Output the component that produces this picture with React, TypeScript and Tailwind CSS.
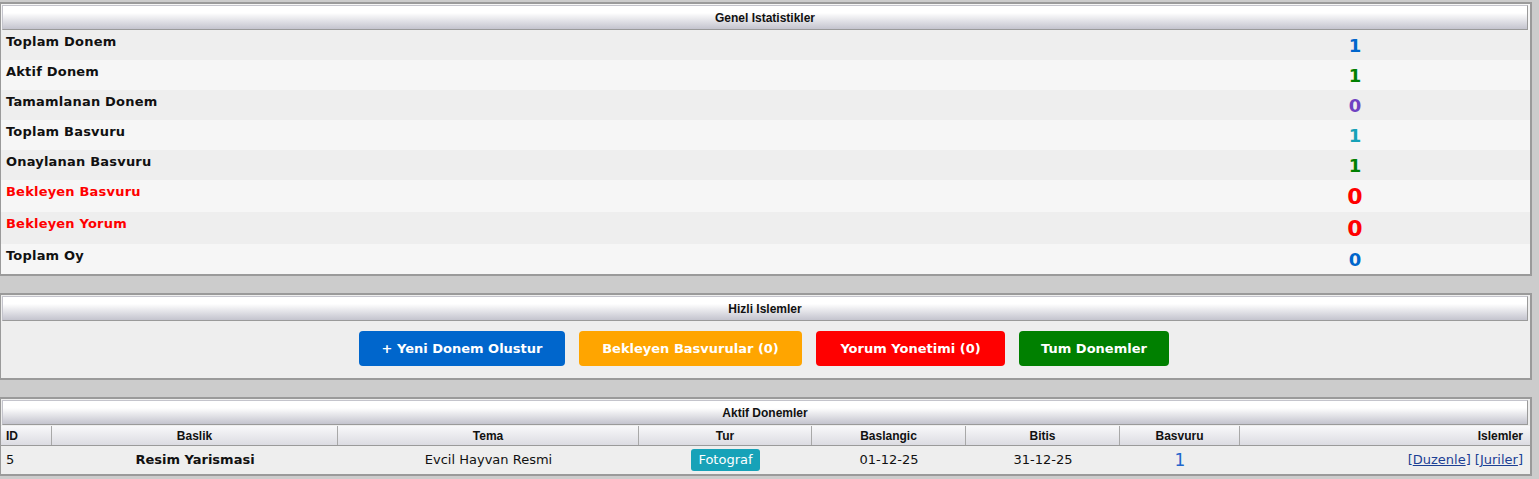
import React from "react";

const FONT = { fontFamily: '"DejaVu Sans", Verdana, sans-serif' };
const HFONT = { fontFamily: '"Liberation Sans", Arial, sans-serif' };

function Header({ title }: { title: string }) {
  return (
    <div
      className="mt-[1px] ml-[1px] mr-[2px] h-[25px] flex items-center justify-center border border-[#c4c4cc] border-b-[#9a9a9a] border-r-[#9a9a9a] bg-linear-to-b from-white from-30% to-[#c4c4ce] text-[12px] font-bold text-[#111]"
      style={HFONT}
    >
      {title}
    </div>
  );
}

type Stat = { label: string; value: string; labelColor: string; valueColor: string; big?: boolean };

const stats: Stat[] = [
  { label: "Toplam Donem", value: "1", labelColor: "text-[#111]", valueColor: "text-[#0066cc]" },
  { label: "Aktif Donem", value: "1", labelColor: "text-[#111]", valueColor: "text-[#008000]" },
  { label: "Tamamlanan Donem", value: "0", labelColor: "text-[#111]", valueColor: "text-[#6f42c1]" },
  { label: "Toplam Basvuru", value: "1", labelColor: "text-[#111]", valueColor: "text-[#17a2b8]" },
  { label: "Onaylanan Basvuru", value: "1", labelColor: "text-[#111]", valueColor: "text-[#008000]" },
  { label: "Bekleyen Basvuru", value: "0", labelColor: "text-[#ff0000]", valueColor: "text-[#ff0000]", big: true },
  { label: "Bekleyen Yorum", value: "0", labelColor: "text-[#ff0000]", valueColor: "text-[#ff0000]", big: true },
  { label: "Toplam Oy", value: "0", labelColor: "text-[#111]", valueColor: "text-[#0066cc]" },
];

const cols = [
  { name: "ID", align: "justify-start pl-[5px]" },
  { name: "Baslik", align: "justify-center" },
  { name: "Tema", align: "justify-center" },
  { name: "Tur", align: "justify-center" },
  { name: "Baslangic", align: "justify-center" },
  { name: "Bitis", align: "justify-center" },
  { name: "Basvuru", align: "justify-center" },
  { name: "Islemler", align: "justify-end pr-[7px]" },
];

const grid = "grid grid-cols-[51px_286px_301px_173px_154px_154px_120px_1fr]";

const panel = "border-l border-t-2 border-r-2 border-b-2 border-[#9a9a9a]";

export default function App() {
  return (
    <div className="bg-[#cccccc] min-h-[479px] w-full pt-[2px] pr-[7px]" style={FONT}>
      {/* Panel 1 */}
      <div className={`${panel} bg-[#f6f6f6]`}>
        <Header title="Genel Istatistikler" />
        <div>
          {stats.map((s, i) => (
            <div
              key={s.label}
              className={`flex ${s.big ? "h-[32px]" : "h-[30px]"} ${i % 2 === 0 ? "bg-[#eeeeee]" : "bg-[#f6f6f6]"}`}
            >
              <div
                className={`flex-1 pl-[5px] pt-[4px] leading-[16px] text-[13px] tracking-[0.2px] font-bold ${s.labelColor}`}
              >
                {s.label}
              </div>
              <div
                className={`w-[350px] flex items-center justify-center font-bold ${s.valueColor} ${
                  s.big ? "text-[22px]" : "text-[18px]"
                }`}
              >
                {s.value}
              </div>
            </div>
          ))}
        </div>
      </div>

      {/* Panel 2 */}
      <div className={`mt-[17px] ${panel} bg-[#eeeeee]`}>
        <Header title="Hizli Islemler" />
        <div className="flex justify-center gap-[14px] pt-[10px] pb-[12px] pr-[3px]">
          <button className="h-[35px] w-[206px] rounded-[4px] bg-[#0066cc] text-white text-[13px] font-bold">
            + Yeni Donem Olustur
          </button>
          <button className="h-[35px] w-[223px] rounded-[4px] bg-[#ffa500] text-white text-[13px] font-bold">
            Bekleyen Basvurular (0)
          </button>
          <button className="h-[35px] w-[189px] rounded-[4px] bg-[#ff0000] text-white text-[13px] font-bold">
            Yorum Yonetimi (0)
          </button>
          <button className="h-[35px] w-[150px] rounded-[4px] bg-[#008000] text-white text-[13px] font-bold">
            Tum Donemler
          </button>
        </div>
      </div>

      {/* Panel 3 */}
      <div className={`mt-[17px] ${panel} bg-[#eeeeee]`}>
        <Header title="Aktif Donemler" />
        <div className={`${grid} h-[20px] border-b border-[#9a9a9a] mt-[1px]`}>
          {cols.map((c, i) => (
            <div
              key={c.name}
              className={`flex items-center ${c.align} bg-linear-to-b from-[#f8f8fa] to-[#dcdce2] text-[12px] font-bold text-[#111] ${
                i < cols.length - 1 ? "border-r border-[#a8a8a8]" : ""
              }`}
              style={HFONT}
            >
              {c.name}
            </div>
          ))}
        </div>
        <div className={`${grid} h-[28px] text-[13px] text-[#111]`}>
          <div className="flex items-center pl-[5px]">5</div>
          <div className="flex items-center justify-center font-bold">Resim Yarismasi</div>
          <div className="flex items-center justify-center">Evcil Hayvan Resmi</div>
          <div className="flex items-center justify-center">
            <span className="bg-[#17a2b8] text-white rounded-[3px] px-[7px] h-[22px] leading-[22px] text-[13px]">
              Fotograf
            </span>
          </div>
          <div className="flex items-center justify-center">01-12-25</div>
          <div className="flex items-center justify-center">31-12-25</div>
          <div className="flex items-center justify-center text-[17px] text-[#2266cc] pt-[2px]">1</div>
          <div className="flex items-center justify-end pr-[7px] text-[#1c3f94]">
            [<span className="underline">Duzenle</span>]&nbsp;[<span className="underline">Juriler</span>]
          </div>
        </div>
      </div>
    </div>
  );
}
